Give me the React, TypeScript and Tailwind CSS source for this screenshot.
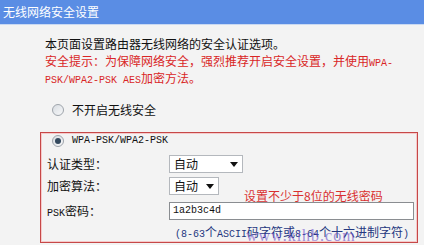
import React from "react";

const Ascii = ({ children }: { children: React.ReactNode }) => (
  <span className="font-['Liberation_Mono',monospace] text-[10px] leading-none">{children}</span>
);

const Radio = ({ checked }: { checked?: boolean }) => (
  <span className="flex h-[12px] w-[12px] items-center justify-center rounded-full border border-[#9ea4ab] bg-gradient-to-br from-[#d9dde2] to-[#f7f8f9]">
    {checked && <span className="h-[6px] w-[6px] rounded-full bg-[#34495e]" />}
  </span>
);

const Select = ({ width }: { width: string }) => (
  <div className={`flex h-[18px] items-center justify-between border border-[#b4b8bd] bg-white pl-[4px] pr-[4px] ${width}`}>
    <span className="text-[12px] leading-none">自动</span>
    <svg width="8" height="5" viewBox="0 0 8 5">
      <path d="M0 0h8L4 5z" fill="#111" />
    </svg>
  </div>
);

export default function App() {
  return (
    <div className="relative h-[245px] w-[424px] overflow-hidden bg-[#f3f3f3] font-['Noto_Sans_CJK_SC',sans-serif] text-[12px] text-[#111]">
      <div className="h-[25px] border-b border-[#c9d9f2] bg-[#5a8de4] pl-[3px] text-[12px] leading-[23px] text-white">
        无线网络安全设置
      </div>

      <div className="pl-[40px] pt-[10px]">
        <div className="pl-[5px] leading-[17px]">
          <p className="h-[17px]">本页面设置路由器无线网络的安全认证选项。</p>
          <p className="h-[17px] text-[#d92626]">
            安全提示：为保障网络安全，强烈推荐开启安全设置，并使用<Ascii>WPA-</Ascii>
          </p>
          <p className="h-[17px] text-[#d92626]">
            <Ascii>PSK/WPA2-PSK AES</Ascii>加密方法。
          </p>
        </div>

        <div className="mt-[16px] flex h-[16px] items-center gap-[8px] pl-[12px]">
          <Radio />
          <span>不开启无线安全</span>
        </div>

        <div className="relative mt-[14px] h-[111px] w-[378px] border border-[#c64848] shadow-[inset_0_0_0_1px_#f6caca]">
          <div className="flex h-[16px] items-center gap-[8px] pl-[11px]">
            <Radio checked />
            <Ascii>WPA-PSK/WPA2-PSK</Ascii>
          </div>

          <div className="mt-[6px] flex h-[18px] items-center pl-[6px]">
            <span className="w-[122px]">认证类型：</span>
            <Select width="w-[74px]" />
          </div>
          <div className="mt-[4px] flex h-[18px] items-center pl-[6px]">
            <span className="w-[122px]">加密算法：</span>
            <Select width="w-[50px]" />
          </div>
          <div className="mt-[7px] flex h-[18px] items-center pl-[6px]">
            <span className="w-[122px]">
              <Ascii>PSK</Ascii>密码：
            </span>
            <div className="flex h-[18px] w-[245px] items-center border border-[#8a8d91] bg-white pl-[3px]">
              <Ascii>1a2b3c4d</Ascii>
            </div>
          </div>
          <div className="mt-[4px] h-[16px] pl-[134px] leading-[16px] text-[#243780]">
            <Ascii>(8-63</Ascii>个<Ascii>ASCII</Ascii>码字符或<Ascii>8-64</Ascii>个十六进制字符<Ascii>)</Ascii>
          </div>

          <span className="absolute left-[203px] top-[55px] text-[12px] leading-[16px] text-[#d93030]">
            设置不少于8位的无线密码
          </span>
        </div>
      </div>

      <span className="absolute left-[246px] top-[227px] font-['Liberation_Serif',serif] text-[16px] leading-[18px] tracking-[1px] text-[#6a4cc8] opacity-60">
        www.kihb.com
      </span>
    </div>
  );
}
